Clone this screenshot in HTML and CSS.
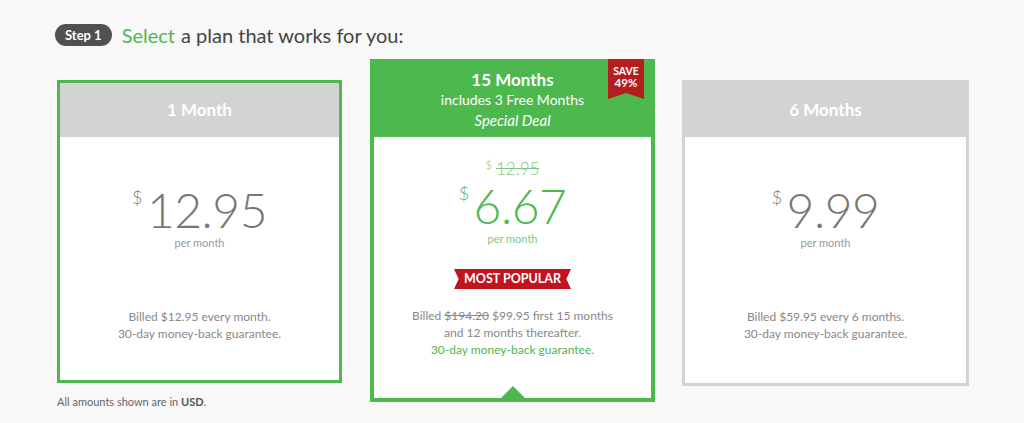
FILE: index.html
```html
<!DOCTYPE html>
<html lang="en">
<head>
    <meta charset="UTF-8">
    <meta name="viewport" content="width=device-width, initial-scale=1.0">
    <title>Select a plan</title>
    <link rel="stylesheet" href="styles.css">
</head>
<body>
    <div class="page">
        <h1 class="step-title">
            <span class="step-badge">Step 1</span>
            <span class="green">Select</span> a plan that works for you:
        </h1>

        <div class="plans">
            <!-- 1 month -->
            <div class="plan plan-selected">
                <div class="plan-head">1 Month</div>
                <div class="plan-body">
                    <div class="price"><span class="cur">$</span>12.95</div>
                    <div class="per">per month</div>
                    <div class="billed">
                        Billed $12.95 every month.<br>
                        30-day money-back guarantee.
                    </div>
                </div>
            </div>

            <!-- 15 months, the deal -->
            <div class="plan plan-deal">
                <div class="plan-head">
                    <div class="deal-title">15 Months</div>
                    <div class="deal-sub">includes 3 Free Months</div>
                    <div class="deal-note">Special Deal</div>
                    <div class="save-tag">
                        <div>SAVE</div>
                        <div class="save-pct">49%</div>
                    </div>
                </div>
                <div class="plan-body">
                    <div class="old-price"><span class="cur">$</span><s>12.95</s></div>
                    <div class="price"><span class="cur">$</span>6.67</div>
                    <div class="per">per month</div>
                    <div class="popular"><span>MOST POPULAR</span></div>
                    <div class="billed billed-deal">
                        Billed <s>$194.20</s> $99.95 first 15 months<br>
                        and 12 months thereafter.<br>
                        <span class="green">30-day money-back guarantee.</span>
                    </div>
                    <div class="arrow"></div>
                </div>
            </div>

            <!-- 6 months -->
            <div class="plan plan-plain">
                <div class="plan-head">6 Months</div>
                <div class="plan-body">
                    <div class="price"><span class="cur">$</span>9.99</div>
                    <div class="per">per month</div>
                    <div class="billed">
                        Billed $59.95 every 6 months.<br>
                        30-day money-back guarantee.
                    </div>
                </div>
            </div>
        </div>

        <p class="note">All amounts shown are in <b>USD</b>.</p>
    </div>
</body>
</html>
```

FILE: styles.css
```css
* {
    box-sizing: border-box;
}
body {
    margin: 0;
    background-color: #f8f8f8;
    font-family: Lato, "Open Sans", Arial, sans-serif;
    color: #777;
}
.page {
    padding: 22px 0 0 55px;
    position: relative;
    height: 423px;
}
.green {
    color: #4cb84e;
}
.step-title {
    margin: 0;
    display: flex;
    align-items: center;
    gap: 6px;
    font-size: 20px;
    font-weight: 400;
    color: #444;
    height: 26px;
}
.step-title .green {
    margin-left: 2px;
}
.step-badge {
    background-color: #505050;
    color: #fff;
    font-size: 13px;
    font-weight: 700;
    padding: 0 10px;
    border-radius: 11px;
    height: 22px;
    line-height: 22px;
    margin-right: 2px;
}
.plans {
    display: flex;
    align-items: flex-start;
    gap: 28px;
    margin-top: 11px;
    margin-left: 2px;
}
.plan {
    width: 285px;
    background-color: #fff;
    text-align: center;
    position: relative;
    display: flex;
    flex-direction: column;
}
.plan-selected {
    margin-top: 21px;
    height: 303px;
    border: 3px solid #4cb84e;
}
.plan-plain {
    margin-top: 21px;
    width: 287px;
    height: 306px;
    border: 3px solid #d3d3d3;
    margin-left: -1px;
}
.plan-deal {
    height: 343px;
    border: 4px solid #4cb84e;
    border-top: 0;
}
.plan-head {
    background-color: #d3d3d3;
    color: #fff;
    font-size: 17px;
    font-weight: 700;
    height: 54px;
    line-height: 54px;
}
.plan-deal .plan-head {
    background-color: #4cb84e;
    height: 78px;
    line-height: normal;
    padding: 11px 4px 0;
    margin: 0 -4px;
    position: relative;
}
.deal-title {
    font-size: 17px;
    font-weight: 700;
    line-height: 20px;
}
.deal-sub {
    font-size: 14px;
    font-weight: 400;
    line-height: 20px;
}
.deal-note {
    font-size: 15px;
    font-weight: 400;
    font-style: italic;
    line-height: 20px;
}
.save-tag {
    position: absolute;
    top: 0;
    left: 238px;
    width: 36px;
    height: 40px;
    padding-top: 6px;
    background-color: #b51d1f;
    color: #fff;
    font-size: 10.5px;
    font-weight: 700;
    line-height: 12px;
    clip-path: polygon(0 0, 100% 0, 100% 100%, 50% 85%, 0 100%);
}
.save-pct {
    font-size: 11.5px;
}
.plan-body {
    flex: 1;
    padding-top: 50px;
    position: relative;
}
.plan-deal .plan-body {
    padding-top: 22px;
}
.price {
    font-size: 48px;
    font-weight: 300;
    line-height: 46px;
    color: #777;
    letter-spacing: -0.5px;
}
.price .cur {
    font-size: 18px;
    vertical-align: top;
    line-height: 20px;
    margin-right: 5px;
}
.plan-deal .price {
    color: #4cb84e;
}
.old-price {
    color: #7ec97f;
    font-size: 17px;
    font-weight: 300;
    line-height: 20px;
    margin-bottom: 4px;
}
.old-price .cur {
    font-size: 11px;
    vertical-align: top;
    line-height: 12px;
    margin-right: 4px;
}
.per {
    margin-top: 3px;
    font-size: 11px;
    line-height: 14px;
    color: #999;
}
.plan-deal .per {
    color: #7ec97f;
}
.billed {
    margin-top: 58px;
    font-size: 12px;
    line-height: 17px;
    color: #888;
}
.popular {
    margin-top: 21px;
}
.popular span {
    display: inline-block;
    background-color: #c0141f;
    color: #fff;
    font-size: 12.5px;
    font-weight: 700;
    line-height: 20px;
    padding: 0 10px;
    clip-path: polygon(0 0, 100% 0, 96% 50%, 100% 100%, 0 100%, 4% 50%);
}
.billed-deal {
    margin-top: 18px;
}
.arrow {
    position: absolute;
    bottom: 0;
    left: 50%;
    margin-left: -12px;
    width: 0;
    height: 0;
    border-left: 12px solid transparent;
    border-right: 12px solid transparent;
    border-bottom: 12px solid #4cb84e;
}
.note {
    position: absolute;
    left: 57px;
    top: 395px;
    margin: 0;
    font-size: 11px;
    color: #666;
}
.note b {
    color: #555;
}
```
